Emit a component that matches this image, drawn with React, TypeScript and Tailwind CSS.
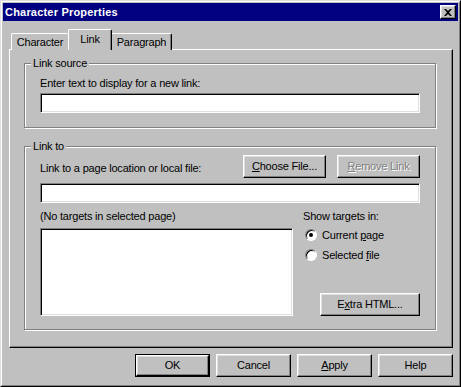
import type { ReactNode } from "react";

const raised =
  "border border-t-white border-l-white border-r-black border-b-black shadow-[inset_-1px_-1px_0_#808080,inset_1px_1px_0_#dfdfdf]";
const sunken =
  "bg-white border border-t-[#808080] border-l-[#808080] border-r-white border-b-white shadow-[inset_1px_1px_0_#000,inset_-1px_-1px_0_#dfdfdf]";

function Button({
  children,
  className = "",
  isDefault = false,
  disabled = false,
}: {
  children: ReactNode;
  className?: string;
  isDefault?: boolean;
  disabled?: boolean;
}) {
  const face = (
    <div
      className={`flex h-full w-full items-center justify-center ${raised} ${
        disabled ? "text-[#808080] [text-shadow:1px_1px_0_#fff]" : "text-black"
      }`}
    >
      {children}
    </div>
  );
  if (isDefault) {
    return <div className={`border border-black ${className}`}>{face}</div>;
  }
  return <div className={className}>{face}</div>;
}

function GroupBox({ label, className, children }: { label: string; className: string; children: ReactNode }) {
  return (
    <div
      className={`relative border border-[#808080] shadow-[inset_1px_1px_0_#fff,1px_1px_0_#fff] ${className}`}
    >
      <span className="absolute -top-[7px] left-[6px] bg-[#c0c0c0] px-[2px] leading-[13px]">{label}</span>
      {children}
    </div>
  );
}

function Radio({ checked, children }: { checked?: boolean; children: ReactNode }) {
  return (
    <div className="flex h-[20px] items-center pl-[2px]">
      <div className="flex h-[12px] w-[12px] items-center justify-center rounded-full border border-t-[#808080] border-l-[#808080] border-r-white border-b-white bg-white shadow-[inset_1px_1px_0_#000]">
        {checked && <div className="h-[4px] w-[4px] rounded-full bg-black" />}
      </div>
      <span className="ml-[5px]">{children}</span>
    </div>
  );
}

const U = ({ children }: { children: ReactNode }) => <span className="underline underline-offset-[1px]">{children}</span>;

export default function App() {
  return (
    <div
      className="h-[387px] w-[461px] border border-t-[#dfdfdf] border-l-[#dfdfdf] border-r-black border-b-black bg-[#c0c0c0] text-[11px] leading-[13px] tracking-[-0.2px] text-black"
      style={{ fontFamily: '"Liberation Sans", Arial, sans-serif' }}
    >
      <div className="flex h-full flex-col border border-t-white border-l-white border-r-[#808080] border-b-[#808080] p-px">
        {/* title bar */}
        <div className="flex h-[18px] items-center justify-between bg-[#000080] pl-[2px] pr-[2px]">
          <span className="font-bold tracking-[0.2px] text-white">Character Properties</span>
          <div className={`flex h-[14px] w-[16px] items-center justify-center bg-[#c0c0c0] ${raised}`}>
            <svg width="8" height="7" viewBox="0 0 8 7">
              <path d="M0 0h2l2 2 2-2h2L5 3.5 8 7H6L4 5 2 7H0l3-3.5z" fill="#000" />
            </svg>
          </div>
        </div>

        <div className="flex flex-col pl-[6px] pt-[8px]">
          {/* tabs */}
          <div className="relative z-10 -mb-px ml-[2px] flex h-[21px] items-end">
            <div className="flex h-[17px] w-[57px] items-center justify-center rounded-tl-[2px] rounded-tr-[2px] border-t border-l border-white bg-[#c0c0c0] pt-[1px]">
              Character
            </div>
            <div className="flex h-[21px] w-[44px] items-start justify-center rounded-tl-[2px] rounded-tr-[2px] border-t border-l border-r border-t-white border-l-white border-r-black bg-[#c0c0c0] pt-[3px] shadow-[inset_-1px_0_0_#808080]">
              Link
            </div>
            <div className="flex h-[17px] w-[60px] items-center justify-center rounded-tr-[2px] border-t border-r border-t-white border-r-black bg-[#c0c0c0] pt-[1px] shadow-[inset_-1px_0_0_#808080]">
              Paragraph
            </div>
          </div>

          {/* panel */}
          <div className="h-[299px] w-[444px] border border-t-white border-l-white border-r-black border-b-black pl-[14px] pt-[13px] shadow-[inset_-1px_-1px_0_#808080]">
            <GroupBox label="Link source" className="h-[65px] w-[412px] pl-[15px] pt-[13px]">
              <div>Enter text to display for a new link:</div>
              <div className={`mt-[3px] h-[20px] w-[380px] ${sunken}`} />
            </GroupBox>

            <GroupBox label="Link to" className="mt-[18px] h-[184px] w-[412px] pl-[15px] pt-[8px]">
              <div className="flex h-[23px] w-[380px] items-end">
                <span className="pb-[3px]">Link to a page location or local file:</span>
                <Button className="ml-auto h-[23px] w-[83px]">
                  <span>
                    <U>C</U>hoose File...
                  </span>
                </Button>
                <Button disabled className="ml-[11px] h-[23px] w-[83px]">
                  <span>
                    <U>R</U>emove Link
                  </span>
                </Button>
              </div>
              <div className={`mt-[5px] h-[20px] w-[380px] ${sunken}`} />

              <div className="mt-[7px] flex w-[380px]">
                <div className="flex flex-col">
                  <div>(No targets in selected page)</div>
                  <div className={`mt-[5px] h-[88px] w-[253px] ${sunken}`} />
                </div>
                <div className="ml-[10px] flex flex-1 flex-col">
                  <div>Show targets in:</div>
                  <div className="mt-[2px]">
                    <Radio checked>
                      Current <U>p</U>age
                    </Radio>
                    <Radio>
                      Selected <U>f</U>ile
                    </Radio>
                  </div>
                  <Button className="ml-auto mt-auto h-[23px] w-[100px]">
                    <span>
                      E<U>x</U>tra HTML...
                    </span>
                  </Button>
                </div>
              </div>
            </GroupBox>
          </div>

          {/* bottom buttons */}
          <div className="mt-[6px] flex w-[444px] justify-end gap-[6px]">
            <Button isDefault className="h-[23px] w-[75px]">
              OK
            </Button>
            <Button className="h-[23px] w-[75px]">Cancel</Button>
            <Button className="h-[23px] w-[75px]">
              <span>
                <U>A</U>pply
              </span>
            </Button>
            <Button className="h-[23px] w-[75px]">Help</Button>
          </div>
        </div>
      </div>
    </div>
  );
}
